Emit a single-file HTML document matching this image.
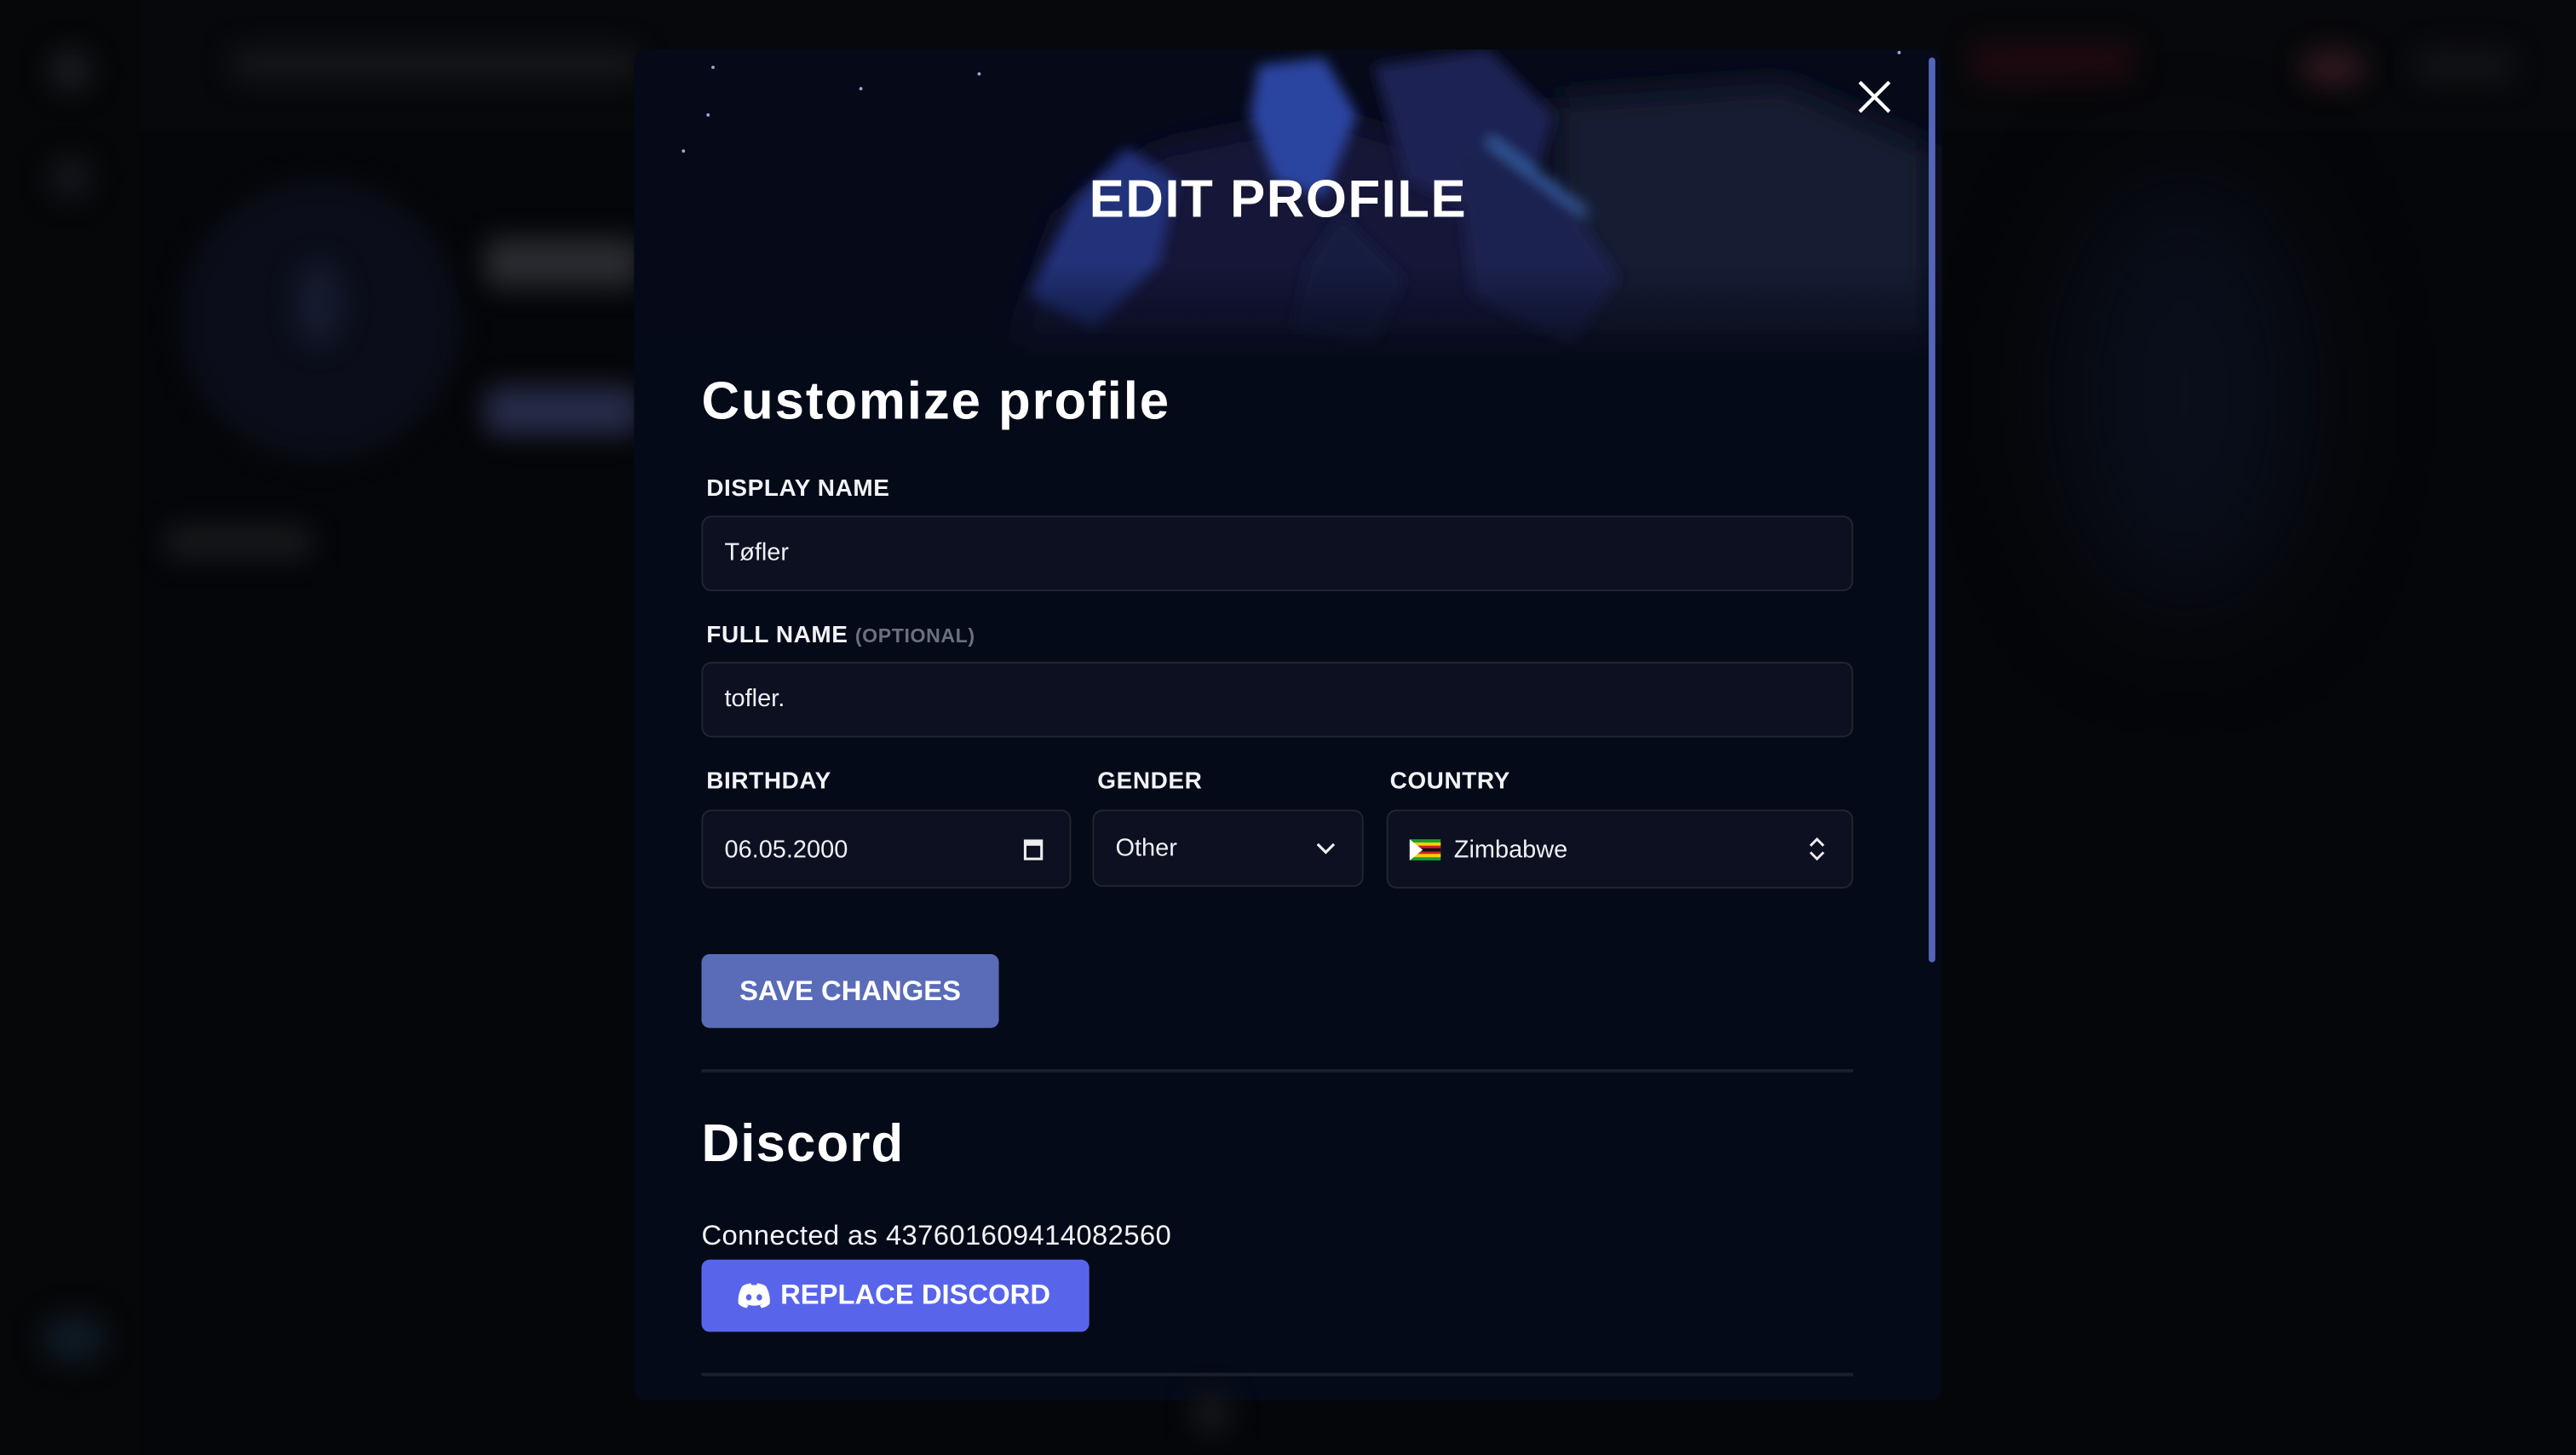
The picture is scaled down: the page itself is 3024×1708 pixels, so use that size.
<!DOCTYPE html>
<html><head><meta charset="utf-8">
<style>
html,body{margin:0;padding:0;width:3024px;height:1708px;overflow:hidden;background:#050609;}
#s{position:absolute;left:0;top:0;width:1568px;height:886px;transform:scale(1.92857,1.92777);transform-origin:0 0;font-family:"Liberation Sans",sans-serif;color:#f2f3f7;}
.b{position:absolute;filter:blur(8px);border-radius:50%;}
.m{position:absolute;left:386px;top:30px;width:796px;height:823px;background:#050a18;border-radius:8px;overflow:hidden;}
.lbl{position:absolute;font-size:14.5px;font-weight:bold;letter-spacing:0.3px;color:#f2f3f7;}
.inp{position:absolute;height:44px;background:#0c1020;border:1.5px solid #22262f;border-radius:6px;box-sizing:border-box;font-size:15px;line-height:43px;padding-left:13px;color:#eef0f5;}
.h{position:absolute;font-weight:bold;font-size:32px;color:#fff;letter-spacing:0.6px;}
.div{position:absolute;left:41px;width:701px;height:2px;background:#1c202a;}
</style></head><body><div id="s">
<div style="position:absolute;left:0;top:0;width:1568px;height:80px;background:#07080b"></div>
<div style="position:absolute;left:0;top:0;width:85px;height:886px;background:#060709"></div>
<div class="b" style="left:30px;top:30px;width:26px;height:26px;background:#1a1b20"></div>
<div class="b" style="left:30px;top:95px;width:26px;height:26px;background:#14161c"></div>
<div class="b" style="left:140px;top:28px;width:250px;height:22px;border-radius:10px;background:#141518"></div>
<div class="b" style="left:110px;top:110px;width:170px;height:170px;background:#0b0e1a"></div>
<div class="b" style="left:180px;top:160px;width:28px;height:50px;background:#161b30"></div>
<div class="b" style="left:295px;top:145px;width:95px;height:30px;border-radius:8px;background:#2a2b30"></div>
<div class="b" style="left:295px;top:235px;width:95px;height:30px;border-radius:8px;background:#262b48"></div>
<div class="b" style="left:100px;top:320px;width:90px;height:20px;border-radius:8px;background:#18191c"></div>
<div class="b" style="left:1200px;top:25px;width:100px;height:25px;border-radius:8px;background:#1e0a10"></div>
<div class="b" style="left:1400px;top:30px;width:40px;height:22px;background:#30181f"></div>
<div class="b" style="left:1470px;top:30px;width:60px;height:20px;border-radius:8px;background:#121316"></div>
<div class="b" style="left:1260px;top:110px;width:140px;height:260px;background:#0a0f1c;filter:blur(35px)"></div>
<div class="b" style="left:25px;top:800px;width:40px;height:30px;background:#0e1a24"></div>
<div class="m">
  <svg width="796" height="200" style="position:absolute;left:0;top:0">
    <defs><filter id="f"><feGaussianBlur stdDeviation="4"/></filter><filter id="f2"><feGaussianBlur stdDeviation="10"/></filter>
    <linearGradient id="g" x1="0" y1="0" x2="0" y2="1"><stop offset="0" stop-color="#050a18" stop-opacity="0"/><stop offset="1" stop-color="#050a18"/></linearGradient></defs>
    <rect width="796" height="200" fill="#060918"/>
    <g filter="url(#f2)">
      <path d="M560 30L700 20L790 60L790 180L560 180Z" fill="#171a30"/>
      <path d="M230 180L260 100L320 60L420 40L520 70L580 120L560 180Z" fill="#121737"/>
    </g>
    <g filter="url(#f)">
      <path d="M240 150L270 90L300 60L330 80L320 130L280 170Z" fill="#22307a"/>
      <path d="M380 10L420 5L440 40L420 90L390 80L375 40Z" fill="#2c45a0"/>
      <path d="M450 10L520 0L560 40L540 110L470 80Z" fill="#1e2452"/>
      <path d="M500 60L560 80L600 140L570 180L510 150Z" fill="#1b2150"/>
      <path d="M430 100L470 140L450 180L400 170L410 130Z" fill="#141a40"/>
      <path d="M520 55L580 100" stroke="#3e6ab8" stroke-width="4"/>
    </g>
    <g fill="#9aa6d8"><circle cx="48" cy="11" r="1"/><circle cx="138" cy="24" r="1"/><circle cx="30" cy="62" r="1"/><circle cx="45" cy="40" r="1"/><circle cx="210" cy="15" r="1"/><circle cx="770" cy="2" r="1"/></g>
    <rect y="130" width="796" height="70" fill="url(#g)"/>
  </svg>
  <div style="position:absolute;left:0;width:784px;top:73px;text-align:center;font-size:32px;font-weight:bold;color:#fff;letter-spacing:0.8px">EDIT PROFILE</div>
  <svg width="22" height="22" style="position:absolute;left:744px;top:18px"><path d="M2 2L20 20M20 2L2 20" stroke="#fff" stroke-width="2.2"/></svg>
  <div style="position:absolute;left:788px;top:5px;width:4px;height:551px;background:#5566b8;border-radius:2px"></div>
  <div class="h" style="left:41px;top:196px;letter-spacing:1px">Customize profile</div>
  <div class="lbl" style="left:44px;top:260px">DISPLAY NAME</div>
  <div class="inp" style="left:41px;top:284px;width:701px;height:46px">Tøfler</div>
  <div class="lbl" style="left:44px;top:349px">FULL NAME <span style="font-size:12px;color:#6b7080">(OPTIONAL)</span></div>
  <div class="inp" style="left:41px;top:373px;width:701px;height:46px">tofler.</div>
  <div class="lbl" style="left:44px;top:438px">BIRTHDAY</div>
  <div class="lbl" style="left:282px;top:438px">GENDER</div>
  <div class="lbl" style="left:460px;top:438px">COUNTRY</div>
  <div class="inp" style="left:41px;top:463px;width:225px;height:48px;line-height:47px">06.05.2000
    <svg width="12" height="14" style="position:absolute;right:16px;top:16px"><rect x="1" y="2" width="10" height="11" fill="none" stroke="#eee" stroke-width="1.6"/><rect x="1" y="2" width="10" height="3" fill="#eee"/></svg></div>
  <div class="inp" style="left:279px;top:463px;width:165px;height:47px;line-height:46px">Other
    <svg width="12" height="8" style="position:absolute;right:16px;top:19px"><path d="M1 1L6 6L11 1" fill="none" stroke="#eee" stroke-width="1.6"/></svg></div>
  <div class="inp" style="left:458px;top:463px;width:284px;height:48px;line-height:47px;padding-left:40px">Zimbabwe
    <svg width="19" height="13" style="position:absolute;left:13px;top:17px"><rect width="19" height="13" fill="#1a9a3a"/><rect y="2" width="19" height="2" fill="#f5d000"/><rect y="4" width="19" height="5" fill="#d0202a"/><rect y="5.5" width="19" height="2" fill="#111"/><rect y="9" width="19" height="2" fill="#f5d000"/><path d="M0 0L8 6.5L0 13Z" fill="#fff"/></svg>
    <svg width="10" height="14" style="position:absolute;right:16px;top:16px"><path d="M1 5L5 1L9 5M1 9L5 13L9 9" fill="none" stroke="#eee" stroke-width="1.5"/></svg></div>
  <div style="position:absolute;left:41px;top:551px;width:181px;height:45px;background:#5a6bb8;border-radius:5px;text-align:center;line-height:45px;font-size:17px;font-weight:bold;color:#fff">SAVE CHANGES</div>
  <div class="div" style="top:621px"></div>
  <div class="h" style="left:41px;top:648px">Discord</div>
  <div style="position:absolute;left:41px;top:713px;font-size:17px;color:#f2f3f7;letter-spacing:0.2px">Connected as 437601609414082560</div>
  <div style="position:absolute;left:41px;top:737px;width:236px;height:44px;background:#5865ea;border-radius:5px;line-height:44px;font-size:17px;font-weight:bold;color:#fff;padding-left:48px;box-sizing:border-box">REPLACE DISCORD
    <svg width="20" height="16" viewBox="0 0 20 16" style="position:absolute;left:22px;top:14px"><path d="M3 2C5 1 7 0.5 8 0.5L8.6 1.6C9.5 1.5 10.5 1.5 11.4 1.6L12 0.5C13 0.5 15 1 17 2C19 5 20 9 19.5 13C18 14.5 16 15.3 14.5 15.5L13.5 13.8C14.3 13.5 15 13.2 15.6 12.8C12 14.5 8 14.5 4.4 12.8C5 13.2 5.7 13.5 6.5 13.8L5.5 15.5C4 15.3 2 14.5 0.5 13C0 9 1 5 3 2Z" fill="#fff"/><ellipse cx="6.8" cy="9" rx="1.7" ry="1.9" fill="#5865ea"/><ellipse cx="13.2" cy="9" rx="1.7" ry="1.9" fill="#5865ea"/></svg></div>
  <div class="div" style="top:806px"></div>
</div>
<div class="b" style="left:725px;top:848px;width:25px;height:25px;background:#16171a"></div>
</div></body></html>
